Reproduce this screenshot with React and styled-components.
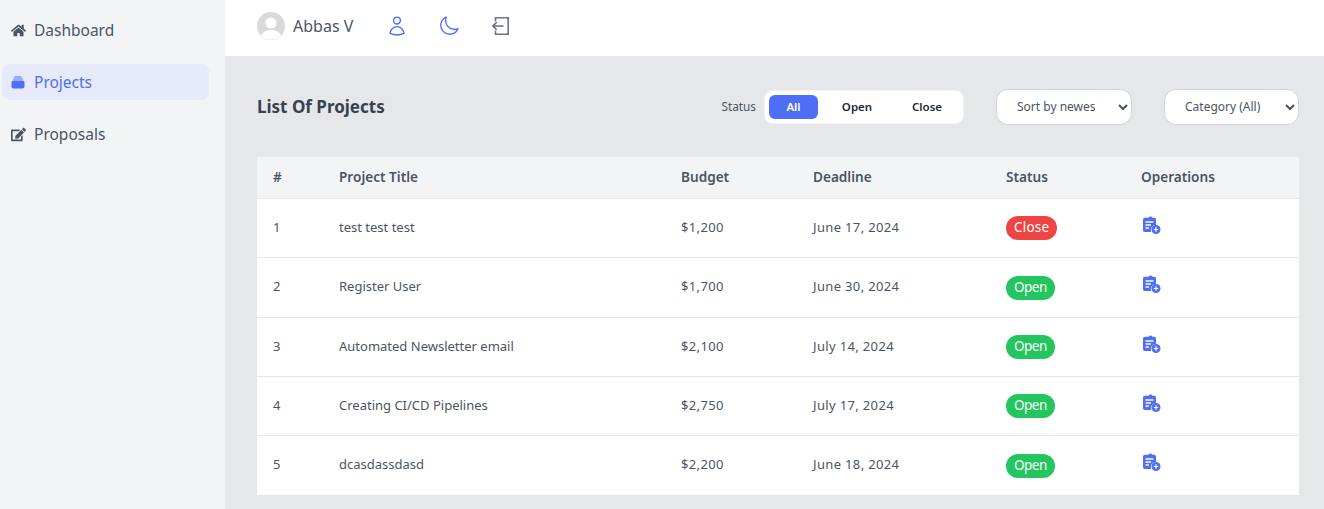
import React from "react";
import styled, { createGlobalStyle } from "styled-components";
import { HiRectangleStack, HiOutlineUser, HiOutlineMoon } from "react-icons/hi2";
import { FaHome, FaEdit } from "react-icons/fa";

const GlobalStyle = createGlobalStyle`
  * { box-sizing: border-box; }
  html, body { margin: 0; padding: 0; height: 100%; }
  body {
    font-family: "Noto Sans", "Open Sans", sans-serif;
    color: #4b5563;
    overflow: hidden;
  }
`;

const Layout = styled.div`
  display: grid;
  grid-template-columns: 225px 1fr;
  grid-template-rows: 56px 1fr;
  height: 509px;
`;

const Sidebar = styled.aside`
  grid-row: 1 / span 2;
  background: #f3f4f6;
  padding: 12px 16px 0 2px;
  display: flex;
  flex-direction: column;
  gap: 16px;
`;

const NavItem = styled.a`
  display: flex;
  align-items: center;
  gap: 8px;
  height: 36px;
  padding-left: 8px;
  border-radius: 8px;
  font-size: 15.5px;
  color: ${(p) => (p.$active ? "#4f6ef7" : "#4b5563")};
  background: ${(p) => (p.$active ? "#e7eafb" : "transparent")};
`;

const NavIcon = styled.span`
  display: flex;
  justify-content: center;
  width: 16px;
`;

const Header = styled.header`
  background: #fff;
  display: flex;
  align-items: center;
  padding: 0 32px 4px;
`;

const Avatar = styled.svg`
  width: 28px;
  height: 28px;
  margin-right: 8px;
`;

const UserName = styled.span`
  font-size: 16px;
  color: #4b5563;
  margin-right: 33px;
  padding-bottom: 1px;
`;

const HeaderIcons = styled.div`
  display: flex;
  align-items: center;
  gap: 30px;
`;

const HeaderIcon = styled.span`
  display: flex;
  color: #4f6ef7;

  svg {
    width: 22px;
    height: 22px;
  }
`;

const Main = styled.main`
  background: #e5e7eb;
  padding: 34px 25px 14px 32px;
`;

const TopBar = styled.div`
  display: flex;
  align-items: center;
  height: 34px;
  margin-bottom: 33px;
`;

const Title = styled.h1`
  flex: 1;
  margin: 0;
  padding-bottom: 2px;
  font-size: 17px;
  font-weight: 700;
  color: #374151;
`;

const FilterLabel = styled.span`
  font-size: 11.8px;
  color: #4b5563;
  margin-right: 8px;
  padding-bottom: 2px;
`;

const Segmented = styled.div`
  display: flex;
  align-items: center;
  gap: 8px;
  width: 200px;
  height: 34px;
  padding: 4px;
  background: #fff;
  border: 1px solid #f3f4f6;
  border-radius: 8px;
  margin-right: 32px;
`;

const SegmentButton = styled.button`
  width: ${(p) => p.$width}px;
  height: 24px;
  border: 0;
  border-radius: 6px;
  padding: 0 0 2px;
  font: 600 11.5px "Noto Sans", sans-serif;
  background: ${(p) => (p.$active ? "#4f6ef7" : "transparent")};
  color: ${(p) => (p.$active ? "#fff" : "#1f2937")};
`;

const Select = styled.select`
  width: ${(p) => p.$width}px;
  height: 36px;
  padding: 0 20px 2px 16px;
  background: #fff;
  border: 1px solid #d1d5db;
  border-radius: 12px;
  font: 12px "Noto Sans", sans-serif;
  color: #4b5563;
  margin-left: ${(p) => p.$gap || 0}px;
`;

const Table = styled.table`
  width: 100%;
  table-layout: fixed;
  border-collapse: collapse;
  background: #fff;
`;

const HeadRow = styled.tr`
  background: #f3f4f6;
  height: 41px;
`;

const Th = styled.th`
  width: ${(p) => p.$width}px;
  padding: 0 16px 1px;
  text-align: left;
  font-size: 13.6px;
  font-weight: 600;
  color: #4b5563;
`;

const Row = styled.tr`
  height: 59px;
  border-top: 1px solid #e5e7eb;

  &:nth-child(3n + 2) {
    height: 60px;
  }
`;

const Td = styled.td`
  padding: 0 16px;
`;

const TextCell = styled(Td)`
  padding-bottom: 2px;
  font-size: 13px;
  color: #4b5563;
  letter-spacing: ${(p) => (p.$wide ? "0.35px" : "0")};
`;

const Badge = styled.span`
  display: inline-block;
  padding: 2px 8px 4px;
  border-radius: 14px;
  font-size: 13.5px;
  line-height: 18px;
  letter-spacing: ${(p) => (p.$open ? "-0.5px" : "0.2px")};
  color: #fff;
  background: ${(p) => (p.$open ? "#22c55e" : "#ef4444")};
`;

const OperationIcon = styled.svg`
  display: block;
  width: 18px;
  height: 18px;
  margin: -6px 0 0 2px;
`;

const projects = [
  { id: 1, title: "test test test", budget: "$1,200", deadline: "June 17, 2024", open: false },
  { id: 2, title: "Register User", budget: "$1,700", deadline: "June 30, 2024", open: true },
  { id: 3, title: "Automated Newsletter email", budget: "$2,100", deadline: "July 14, 2024", open: true },
  { id: 4, title: "Creating CI/CD Pipelines", budget: "$2,750", deadline: "July 17, 2024", open: true },
  { id: 5, title: "dcasdassdasd", budget: "$2,200", deadline: "June 18, 2024", open: true },
];

const ClipboardPlus = () => (
  <OperationIcon viewBox="0 0 18 18">
    <path
      fill="#4f6ef7"
      d="M5.600 1.800a2 2 0 0 1 3.800 0h1.800A1.800 1.800 0 0 1 13 3.600V9a5 5 0 0 0-4.800 7H1.800A1.800 1.800 0 0 1 0 14.200V3.600A1.800 1.800 0 0 1 1.800 1.800z"
    />
    <path stroke="#fff" strokeWidth="1.300" strokeLinecap="round" d="M3 6h7M3 9h4.500M3 12h2.500" />
    <circle cx="13" cy="13.500" r="4.500" fill="#4f6ef7" />
    <path stroke="#fff" strokeWidth="1.200" strokeLinecap="round" d="M13 11.700v3.600M11.200 13.500h3.600" />
  </OperationIcon>
);

const LogoutIcon = () => (
  <svg viewBox="0 0 20 20" width="20" height="20" fill="none" stroke="#6b7280" strokeWidth="1.600" style={{ marginLeft: 2 }}>
    <path d="M3.500 5.500V1.800h12.700v16.400H3.500v-3.700" />
    <path d="M1 10h10.500M4.700 6.300 1 10l3.700 3.700" />
  </svg>
);

export default function App() {
  return (
    <>
      <GlobalStyle />
      <Layout>
        <Sidebar>
          <NavItem>
            <NavIcon>
              <FaHome size={15} />
            </NavIcon>
            Dashboard
          </NavItem>
          <NavItem $active>
            <NavIcon>
              <HiRectangleStack size={17} />
            </NavIcon>
            Projects
          </NavItem>
          <NavItem>
            <NavIcon>
              <FaEdit size={15} />
            </NavIcon>
            Proposals
          </NavItem>
        </Sidebar>
        <Header>
          <Avatar viewBox="0 0 28 28">
            <circle cx="14" cy="14" r="14" fill="#d9d9d9" />
            <circle cx="14" cy="11" r="5.5" fill="#fff" />
            <path fill="#fff" d="M4 23.500c2-4 5.500-5.500 10-5.500s8 1.500 10 5.500A14 14 0 0 1 4 23.500z" />
          </Avatar>
          <UserName>Abbas V</UserName>
          <HeaderIcons>
            <HeaderIcon>
              <HiOutlineUser />
            </HeaderIcon>
            <HeaderIcon>
              <HiOutlineMoon />
            </HeaderIcon>
            <LogoutIcon />
          </HeaderIcons>
        </Header>
        <Main>
          <TopBar>
            <Title>List Of Projects</Title>
            <FilterLabel>Status</FilterLabel>
            <Segmented>
              <SegmentButton $active $width={49}>All</SegmentButton>
              <SegmentButton $width={62}>Open</SegmentButton>
              <SegmentButton $width={62}>Close</SegmentButton>
            </Segmented>
            <Select $width={136}>
              <option>Sort by newest</option>
            </Select>
            <Select $width={135} $gap={32}>
              <option>Category (All)</option>
            </Select>
          </TopBar>
          <Table>
            <thead>
              <HeadRow>
                <Th $width={66}>#</Th>
                <Th $width={342}>Project Title</Th>
                <Th $width={132}>Budget</Th>
                <Th $width={193}>Deadline</Th>
                <Th $width={135}>Status</Th>
                <Th $width={174}>Operations</Th>
              </HeadRow>
            </thead>
            <tbody>
              {projects.map((p) => (
                <Row key={p.id}>
                  <TextCell>{p.id}</TextCell>
                  <TextCell>{p.title}</TextCell>
                  <TextCell $wide>{p.budget}</TextCell>
                  <TextCell $wide>{p.deadline}</TextCell>
                  <Td>
                    <Badge $open={p.open}>{p.open ? "Open" : "Close"}</Badge>
                  </Td>
                  <Td>
                    <ClipboardPlus />
                  </Td>
                </Row>
              ))}
            </tbody>
          </Table>
        </Main>
      </Layout>
    </>
  );
}
